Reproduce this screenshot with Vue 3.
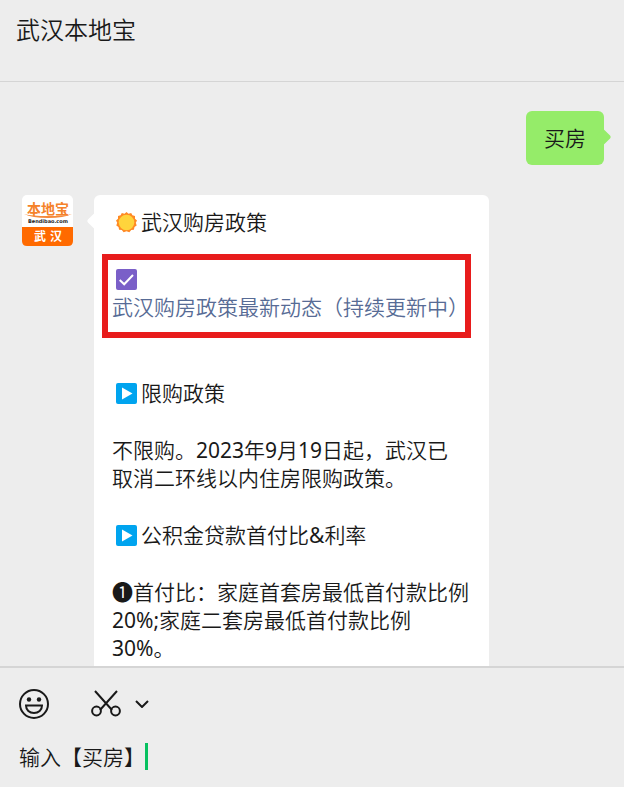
<script setup>
import { ref } from 'vue'

const draft = ref('输入【买房】')
</script>

<template>
  <div class="window">
    <header class="header">
      <h1 class="title">武汉本地宝</h1>
    </header>

    <main class="chat">
      <div class="row sent">
        <p class="bubble sent-bubble">买房</p>
      </div>

      <div class="row received">
        <svg class="avatar" viewBox="0 0 51 51" role="img" aria-label="本地宝 武汉">
          <rect width="51" height="51" rx="5" fill="#fff" />
          <path d="M0 32H51V46Q51 51 46 51H5Q0 51 0 46Z" fill="#ff6a00" />
          <text x="26" y="19" class="logo-name">本地宝</text>
          <path d="M2 19Q10 21 26 21Q42 21 50 19Q42 23 26 23Q10 23 2 19Z" fill="#f58a3c" />
          <text x="26" y="28" class="logo-site">Bendibao.com</text>
          <text x="18" y="46" class="logo-city">武</text>
          <text x="34" y="46" class="logo-city">汉</text>
        </svg>

        <article class="bubble card">
          <p class="line">
            <svg class="emoji" viewBox="0 0 21 21" aria-hidden="true">
              <path
                d="M10.5 0L12.5 1.7L15.2 1L16.4 3.3L19 4L19 6.7L21 8.5L19.8 10.8L20.7 13.4L18.5 15L17.9 17.7L15.2 18L13.4 20.2L10.5 19.3L7.6 20.2L5.8 18L3.1 17.7L2.5 15L.3 13.4L1.2 10.8L0 8.5L2 6.7L2 4L4.6 3.3L5.8 1L8.5 1.7Z"
                fill="#ff8a24"
              />
              <circle cx="10.5" cy="10.5" r="7.8" fill="#ffd43c" />
            </svg>武汉购房政策
          </p>

          <div class="highlight">
            <svg class="emoji" viewBox="0 0 21 21" aria-hidden="true">
              <rect width="21" height="21" rx="2" fill="#7a5fc8" />
              <path d="M3.7 11L8.2 15.3L17 6" fill="none" stroke="#fff" stroke-width="2" />
            </svg>
            <a class="link" href="#policy">武汉购房政策最新动态（持续更新中）</a>
          </div>

          <p class="line">
            <svg class="emoji" viewBox="0 0 21 21" aria-hidden="true">
              <rect width="21" height="21" rx="2" fill="#00a4ef" />
              <path d="M6 4.5V16.5L16.5 10.5Z" fill="#fff" />
            </svg>限购政策
          </p>
          <p class="line">不限购。<span class="latin">2023</span>年<span class="latin">9</span>月<span class="latin">19</span>日起，武汉已<br />取消二环线以内住房限购政策。</p>
          <p class="line">
            <svg class="emoji" viewBox="0 0 21 21" aria-hidden="true">
              <rect width="21" height="21" rx="2" fill="#00a4ef" />
              <path d="M6 4.5V16.5L16.5 10.5Z" fill="#fff" />
            </svg>公积金贷款首付比<span class="latin">&amp;</span>利率
          </p>
          <p class="line"><span class="latin">❶</span>首付比：家庭首套房最低首付款比例<span class="latin">20%;</span>家庭二套房最低首付款比例<span class="latin">30%</span>。</p>
        </article>
      </div>
    </main>

    <footer class="composer">
      <div class="toolbar">
        <button class="tool" type="button" aria-label="表情">
          <svg width="30" height="30" viewBox="0 0 30 30" fill="none" stroke="#191919" stroke-width="2">
            <circle cx="15" cy="15" r="14" />
            <circle cx="10" cy="10.5" r="2.2" fill="#191919" stroke="none" />
            <circle cx="20" cy="10.5" r="2.2" fill="#191919" stroke="none" />
            <path d="M7 16.5H23C23 21 19.5 24 15 24S7 21 7 16.5Z" />
          </svg>
        </button>
        <button class="tool scissors" type="button" aria-label="截图">
          <svg width="30" height="30" viewBox="0 0 30 30" fill="none" stroke="#191919" stroke-width="2">
            <path d="M4 2L21 21M26 2L9 21" />
            <circle cx="5.5" cy="22" r="4.4" />
            <circle cx="24.5" cy="22" r="4.4" />
          </svg>
        </button>
        <button class="tool more" type="button" aria-label="更多截图选项">
          <svg width="14" height="8" viewBox="0 0 14 8" fill="none" stroke="#191919" stroke-width="2">
            <path d="M1 1L7 7L13 1" />
          </svg>
        </button>
      </div>
      <div class="entry">
        <input v-model="draft" class="field" type="text" aria-label="消息" />
        <span class="caret"></span>
      </div>
    </footer>
  </div>
</template>

<style>
body {
  margin: 0;
  background: #ededed;
}
</style>

<style scoped>
.window {
  display: flex;
  flex-direction: column;
  height: 100vh;
  background: #ededed;
  color: #191919;
  font-family: "Noto Sans", "Noto Sans CJK SC", sans-serif;
  font-size: 21px;
  font-weight: 350;
  line-height: 28px;
}

.header {
  padding: 12px 16px 33px;
  border-bottom: 1px solid #d5d5d5;
}

.title {
  margin: 0;
  font-size: 24px;
  font-weight: 350;
  line-height: 36px;
}

.chat {
  flex: 1;
  min-height: 0;
  overflow: hidden;
  padding: 29px 20px 0 22px;
}

.row {
  display: flex;
  align-items: flex-start;
}

.sent {
  justify-content: flex-end;
  margin-bottom: 30px;
}

.received {
  gap: 21px;
}

.bubble {
  position: relative;
  margin: 0;
  border-radius: 6px;
}

.bubble::before {
  content: "";
  position: absolute;
  width: 12px;
  height: 12px;
  border-radius: 2px;
  transform: rotate(45deg);
}

.sent-bubble {
  padding: 13px 18px;
  background: #95ec69;
}

.sent-bubble::before {
  top: 20px;
  right: -5px;
  background: #95ec69;
}

.card {
  flex: 0 1 395px;
  min-width: 0;
  box-sizing: border-box;
  padding: 13px 18px;
  background: #fff;
}

.card::before {
  top: 20px;
  left: -5px;
  background: #fff;
}

.avatar {
  flex: none;
  width: 51px;
  height: 51px;
}

.logo-name,
.logo-site,
.logo-city {
  font-family: "Noto Sans CJK SC", sans-serif;
  font-weight: 700;
  text-anchor: middle;
}

.logo-name {
  font-size: 14px;
  fill: #f5822a;
}

.logo-site {
  font-family: "DejaVu Sans", sans-serif;
  font-size: 5px;
  fill: #222;
}

.logo-city {
  font-size: 12px;
  fill: #fff;
}

.line {
  margin: 0 0 29px;
}

.latin {
  font-weight: 400;
}

.emoji {
  width: 21px;
  height: 21px;
  margin: 0 4px;
  vertical-align: -3px;
}

.highlight {
  display: flex;
  flex-direction: column;
  gap: 3px;
  margin: -11px 0 41px -10px;
  padding: 9px 0 11px 4px;
  border: 6px solid #e81c1c;
}

.link {
  color: #576b95;
  text-decoration: none;
  white-space: nowrap;
}

.composer {
  padding: 21px 19px 16px;
  border-top: 2px solid #d5d5d5;
}

.toolbar {
  display: flex;
  align-items: center;
  margin-bottom: 22px;
}

.tool {
  display: flex;
  padding: 0;
  border: 0;
  background: none;
}

.scissors {
  margin-left: 42px;
}

.more {
  margin-left: 14px;
}

.entry {
  display: flex;
  align-items: center;
}

.field {
  field-sizing: content;
  height: 30px;
  padding: 0;
  border: 0;
  outline: 0;
  background: none;
  color: inherit;
  font: inherit;
}

.caret {
  width: 3px;
  height: 27px;
  background: #07c160;
}
</style>
